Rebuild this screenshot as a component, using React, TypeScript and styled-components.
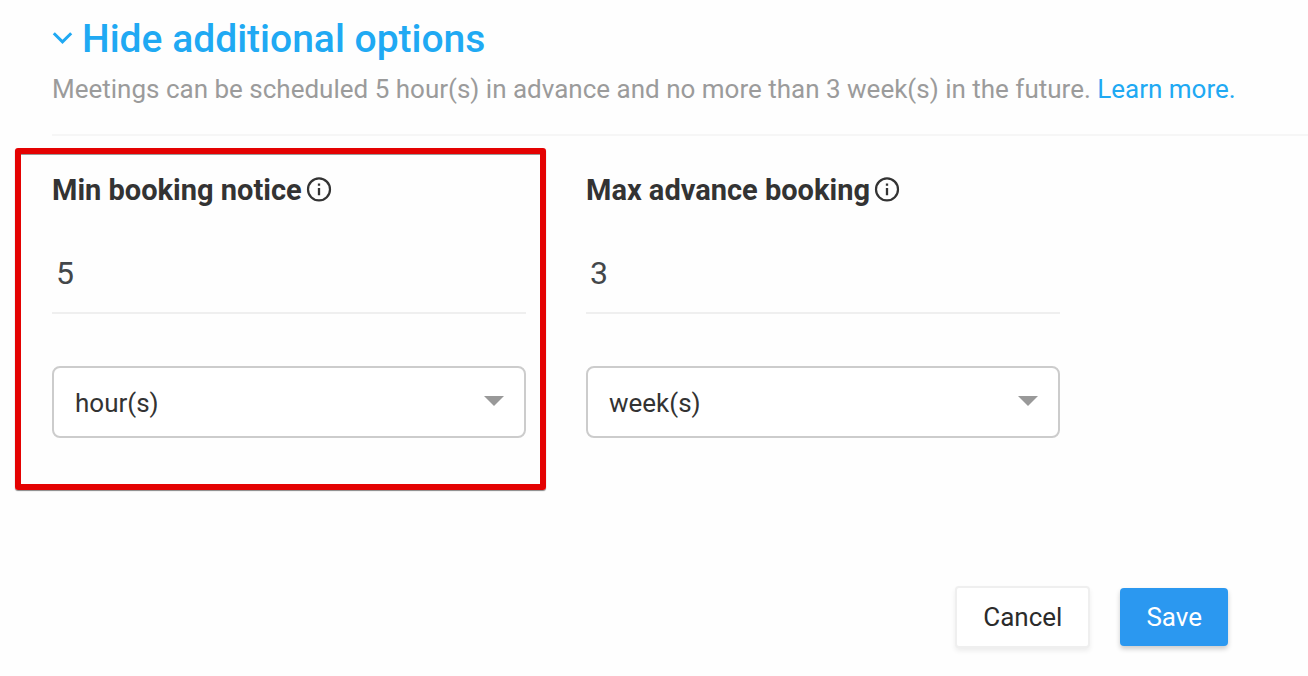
import { useState } from "react";
import styled, { createGlobalStyle, css } from "styled-components";

const GlobalStyle = createGlobalStyle`
  * { box-sizing: border-box; }
  body {
    margin: 0;
    background: #fefefe;
    color: #333;
    font-family: Roboto, "Liberation Sans", sans-serif;
    font-size: 26px;
  }
`;

const Page = styled.main`
  padding: 15px 0 28px 52px;
`;

const Header = styled.header`
  padding-bottom: 29px;
  border-bottom: 2px solid #f6f6f6;
`;

const Title = styled.h1`
  margin: 0 0 10px;
  font-size: 39px;
  font-weight: 500;
  line-height: 48px;
`;

const Toggle = styled.button`
  display: flex;
  align-items: center;
  gap: 8px;
  padding: 0;
  border: 0;
  background: none;
  color: #20a9f3;
  font: inherit;
  cursor: pointer;
`;

const Summary = styled.p`
  margin: 0;
  color: #9b9b9b;
  line-height: 32px;
`;

const LearnMore = styled.a`
  color: #20a9f3;
  text-decoration: none;
`;

const Fields = styled.div`
  display: grid;
  grid-template-columns: repeat(2, minmax(0, 474px));
  gap: 60px;
  padding-top: 36px;
`;

const Field = styled.div<{ $marked?: boolean }>`
  position: relative;
  display: flex;
  flex-direction: column;

  ${({ $marked }) =>
    $marked &&
    css`
      &::after {
        content: "";
        position: absolute;
        inset: -24px -20px -52px -37px;
        border: 6px solid #e40202;
        border-radius: 3px;
        box-shadow: 0 1px 1px #888, inset 0 1px 0 #999;
        pointer-events: none;
      }
    `}
`;

const FieldHeader = styled.div`
  display: flex;
  align-items: center;
  gap: 4px;
  height: 36px;
`;

const Label = styled.label`
  font-size: 29px;
  font-weight: 700;
  line-height: 36px;
`;

const NumberInput = styled.input`
  width: 100%;
  height: 82px;
  margin: 24px 0 52px;
  padding: 2px 4px 0;
  border: 0;
  border-bottom: 2px solid #efefef;
  background: none;
  color: #43474a;
  font: inherit;
  font-size: 32px;
`;

const SelectBox = styled.div`
  display: grid;
  align-items: center;

  > * { grid-area: 1 / 1; }
  > svg {
    justify-self: end;
    margin: 0 22px 2px 0;
    pointer-events: none;
  }
`;

const Select = styled.select`
  appearance: none;
  width: 100%;
  height: 72px;
  padding: 2px 52px 0 21px;
  border: 2px solid #ccc;
  border-radius: 8px;
  background: #fff;
  color: #333;
  font: inherit;
`;

const Actions = styled.footer`
  display: flex;
  justify-content: flex-end;
  align-items: center;
  gap: 30px;
  padding: 148px 80px 0 0;
`;

const Button = styled.button<{ $primary?: boolean }>`
  height: ${({ $primary }) => ($primary ? 58 : 62)}px;
  padding: 0 26px;
  border: ${({ $primary }) => ($primary ? "0" : "2px solid #efefef")};
  border-radius: 4px;
  background: ${({ $primary }) => ($primary ? "#2b98f0" : "#fff")};
  color: ${({ $primary }) => ($primary ? "#fff" : "#2b2b2b")};
  box-shadow: 0 3px 5px rgba(0, 0, 0, ${({ $primary }) => ($primary ? 0.2 : 0.07)});
  font: inherit;
  cursor: pointer;
`;

const Chevron = () => (
  <svg width="22" height="22" viewBox="0 0 22 22" fill="none" aria-hidden="true">
    <path d="M1.8 5.2 10.5 13.8 19.2 5.2" stroke="currentColor" strokeWidth="3" />
  </svg>
);

const InfoIcon = () => (
  <svg width="26" height="26" viewBox="0 0 26 26" fill="none" aria-hidden="true">
    <circle cx="13" cy="12.4" r="11" stroke="#333" strokeWidth="2.2" />
    <path d="M13 6.4v2.4M13 11v7.2" stroke="#333" strokeWidth="2.3" />
  </svg>
);

const Caret = () => (
  <svg width="20" height="10" viewBox="0 0 20 10" aria-hidden="true">
    <path d="M0 0h20L10 10z" fill="#999" />
  </svg>
);

const units = ["hour(s)", "day(s)", "week(s)"];

interface LimitProps {
  id: string;
  label: string;
  amount: string;
  unit: string;
  marked?: boolean;
}

const BookingLimit = ({ id, label, amount, unit, marked }: LimitProps) => (
  <Field $marked={marked}>
    <FieldHeader>
      <Label htmlFor={id}>{label}</Label>
      <InfoIcon />
    </FieldHeader>
    <NumberInput id={id} type="text" inputMode="numeric" defaultValue={amount} />
    <SelectBox>
      <Select aria-label={`${label} unit`} defaultValue={unit}>
        {units.map((name) => (
          <option key={name}>{name}</option>
        ))}
      </Select>
      <Caret />
    </SelectBox>
  </Field>
);

export default function App() {
  const [open, setOpen] = useState(true);

  return (
    <>
      <GlobalStyle />
      <Page>
        <Header>
          <Title>
            <Toggle type="button" aria-expanded={open} onClick={() => setOpen(!open)}>
              <Chevron />
              {open ? "Hide" : "Show"} additional options
            </Toggle>
          </Title>
          <Summary>
            Meetings can be scheduled 5 hour(s) in advance and no more than 3 week(s) in the
            future. <LearnMore href="#learn-more">Learn more.</LearnMore>
          </Summary>
        </Header>
        {open && (
          <Fields>
            <BookingLimit id="min-notice" label="Min booking notice" amount="5" unit="hour(s)" marked />
            <BookingLimit id="max-advance" label="Max advance booking" amount="3" unit="week(s)" />
          </Fields>
        )}
        <Actions>
          <Button type="button">Cancel</Button>
          <Button type="button" $primary>Save</Button>
        </Actions>
      </Page>
    </>
  );
}
